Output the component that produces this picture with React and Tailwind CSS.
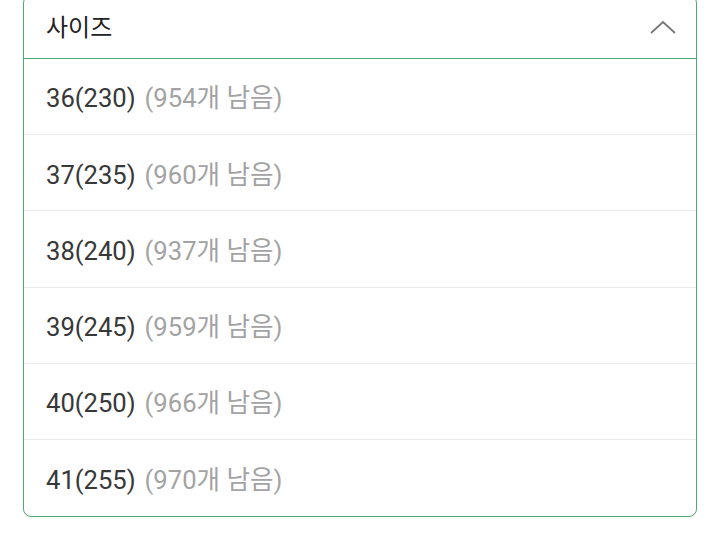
import React from 'react';

const SIZES = [
  { label: '36(230)', left: 954 },
  { label: '37(235)', left: 960 },
  { label: '38(240)', left: 937 },
  { label: '39(245)', left: 959 },
  { label: '40(250)', left: 966 },
  { label: '41(255)', left: 970 },
];

const font = { fontFamily: 'Roboto, "Noto Sans CJK KR", sans-serif' };

export default function App() {
  return (
    <div className="w-[720px] h-[544px] bg-white overflow-hidden" style={font}>
      <div className="mx-[23px] -mt-[5px] border border-[#4caa72] rounded-lg">
        {/* Header */}
        <div className="h-[63px] flex items-center justify-between pl-[22px] pr-[20px] border-b border-[#4caa72]">
          <span className="text-[24px] text-[#222] translate-y-[1px]">사이즈</span>
          <svg width="28" height="16" viewBox="0 0 28 16" fill="none" className="-mr-[1px]">
            <path d="M2 14L14 3L26 14" stroke="#777" strokeWidth="1.8" />
          </svg>
        </div>

        {/* Options */}
        {SIZES.map((s, idx) => (
          <div
            key={idx}
            className={
              'h-[76.2px] flex items-center pl-[22px] text-[25.6px] ' +
              (idx < SIZES.length - 1 ? 'border-b border-[#ebebeb]' : '')
            }
          >
            <div className="flex items-center translate-y-[1.5px]">
              <span className="text-[#383838]">{s.label}</span>
              <span className="ml-[9px] text-[#a3a3a3]">({s.left}개 남음)</span>
            </div>
          </div>
        ))}
      </div>
    </div>
  );
}
